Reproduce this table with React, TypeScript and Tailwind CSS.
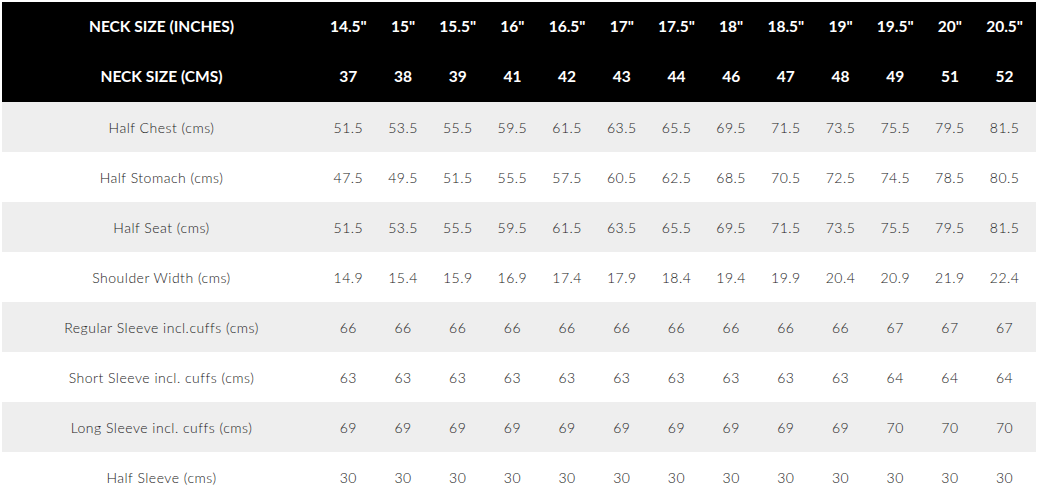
import React from "react";

const inches = ['14.5"', '15"', '15.5"', '16"', '16.5"', '17"', '17.5"', '18"', '18.5"', '19"', '19.5"', '20"', '20.5"'];
const cms = ["37", "38", "39", "41", "42", "43", "44", "46", "47", "48", "49", "51", "52"];

const rows: [string, string[]][] = [
  ["Half Chest (cms)", ["51.5", "53.5", "55.5", "59.5", "61.5", "63.5", "65.5", "69.5", "71.5", "73.5", "75.5", "79.5", "81.5"]],
  ["Half Stomach (cms)", ["47.5", "49.5", "51.5", "55.5", "57.5", "60.5", "62.5", "68.5", "70.5", "72.5", "74.5", "78.5", "80.5"]],
  ["Half Seat (cms)", ["51.5", "53.5", "55.5", "59.5", "61.5", "63.5", "65.5", "69.5", "71.5", "73.5", "75.5", "79.5", "81.5"]],
  ["Shoulder Width (cms)", ["14.9", "15.4", "15.9", "16.9", "17.4", "17.9", "18.4", "19.4", "19.9", "20.4", "20.9", "21.9", "22.4"]],
  ["Regular Sleeve incl.cuffs (cms)", ["66", "66", "66", "66", "66", "66", "66", "66", "66", "66", "67", "67", "67"]],
  ["Short Sleeve incl. cuffs (cms)", ["63", "63", "63", "63", "63", "63", "63", "63", "63", "63", "64", "64", "64"]],
  ["Long Sleeve incl. cuffs (cms)", ["69", "69", "69", "69", "69", "69", "69", "69", "69", "69", "70", "70", "70"]],
  ["Half Sleeve (cms)", ["30", "30", "30", "30", "30", "30", "30", "30", "30", "30", "30", "30", "30"]],
];

export default function App() {
  return (
    <div className="bg-white w-[1042px] h-[500px] overflow-hidden pl-[2px] pt-[2px]" style={{ fontFamily: "Lato, 'Noto Sans', sans-serif" }}>
      <table className="table-fixed border-collapse w-[1034px]">
        <colgroup>
          <col className="w-[319px]" />
          {inches.map((_, i) => (
            <col key={i} className="w-[54.7px]" />
          ))}
          <col />
        </colgroup>
        <thead>
          <tr className="bg-black text-white h-[50px] text-[15.5px] font-black">
            <th className="text-center p-0">NECK SIZE (INCHES)</th>
            {inches.map((v) => (
              <th key={v} className="text-center p-0">{v}</th>
            ))}
            <th className="p-0" />
          </tr>
          <tr className="bg-black text-white h-[50px] text-[15.5px] font-black">
            <th className="text-center p-0">NECK SIZE (CMS)</th>
            {cms.map((v) => (
              <th key={v} className="text-center p-0">{v}</th>
            ))}
            <th className="p-0" />
          </tr>
        </thead>
        <tbody>
          {rows.map(([label, vals], ri) => (
            <tr key={label} className={`h-[50px] text-[14px] font-light tracking-[0.5px] text-[#222222] ${ri % 2 === 0 ? "bg-[#eeeeee]" : "bg-white"}`}>
              <td className="text-center p-0">{label}</td>
              {vals.map((v, i) => (
                <td key={i} className="text-center p-0">{v}</td>
              ))}
              <td className="p-0" />
            </tr>
          ))}
        </tbody>
      </table>
    </div>
  );
}
